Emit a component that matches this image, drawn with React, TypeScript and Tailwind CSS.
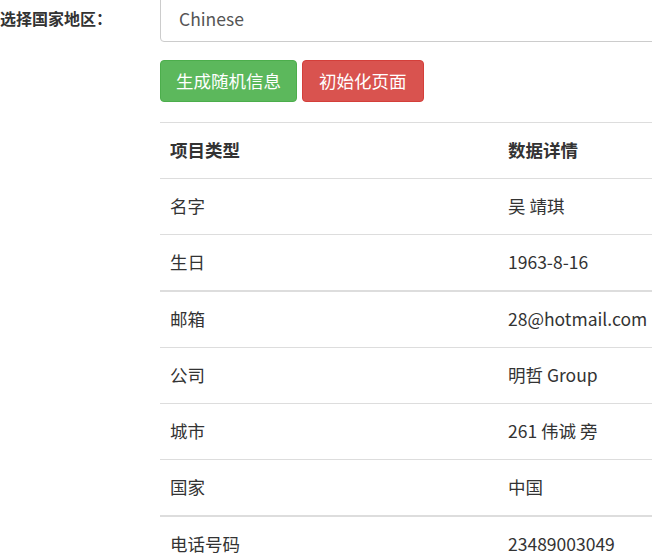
const rows: { label: string; value: string; thick?: boolean }[] = [
  { label: '名字', value: '吴 靖琪' },
  { label: '生日', value: '1963-8-16' },
  { label: '邮箱', value: '28@hotmail.com', thick: true },
  { label: '公司', value: '明哲 Group' },
  { label: '城市', value: '261 伟诚 旁' },
  { label: '国家', value: '中国' },
  { label: '电话号码', value: '23489003049', thick: true },
];

export default function App() {
  return (
    <div className="w-[652px] h-[559px] overflow-hidden bg-white text-[17.5px] text-[#333] font-['Noto_Sans_CJK_SC',sans-serif]">
      <div className="flex">
        {/* label */}
        <div className="w-[160px] shrink-0 pt-[6px] text-[16px] font-bold leading-[24px]">选择国家地区：</div>

        <div className="flex-1 min-w-[560px]">
          <div className="-mt-[6px] h-[48px] border border-[#ccc] rounded-[4px] flex items-center pl-[18px] pt-[2px] text-[#555]">
            Chinese
          </div>

          {/* buttons */}
          <div className="flex gap-[5px] mt-[18px]">
            <button className="h-[42px] px-[15px] rounded-[4px] bg-[#5cb85c] border border-[#4cae4c] text-white">
              生成随机信息
            </button>
            <button className="h-[42px] px-[16px] rounded-[4px] bg-[#d9534f] border border-[#d43f3a] text-white">
              初始化页面
            </button>
          </div>

          {/* table */}
          <div className="mt-[20px] w-[560px]">
            <div className="flex h-[56px] items-center border-t border-[#ddd] font-bold">
              <div className="w-[348px] pl-[10px]">项目类型</div>
              <div>数据详情</div>
            </div>
            {rows.map(r => (
              <div
                key={r.label}
                className={`flex h-[56px] items-center border-[#ddd] ${r.thick ? 'border-t-2 h-[57px]' : 'border-t'}`}
              >
                <div className="w-[348px] pl-[10px]">{r.label}</div>
                <div className="whitespace-nowrap">{r.value}</div>
              </div>
            ))}
          </div>
        </div>
      </div>
    </div>
  );
}
